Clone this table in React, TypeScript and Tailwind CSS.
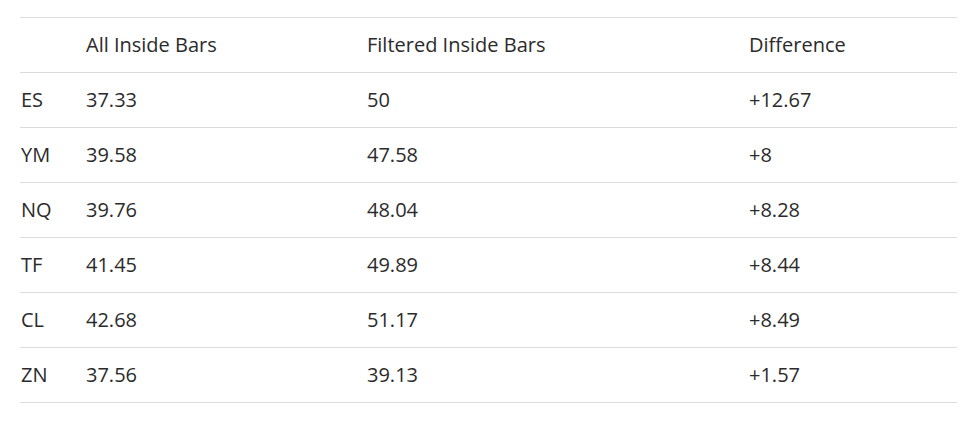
const rows = [
  { sym: "ES", all: "37.33", filtered: "50", diff: "+12.67" },
  { sym: "YM", all: "39.58", filtered: "47.58", diff: "+8" },
  { sym: "NQ", all: "39.76", filtered: "48.04", diff: "+8.28" },
  { sym: "TF", all: "41.45", filtered: "49.89", diff: "+8.44" },
  { sym: "CL", all: "42.68", filtered: "51.17", diff: "+8.49" },
  { sym: "ZN", all: "37.56", filtered: "39.13", diff: "+1.57" },
];

export default function App() {
  return (
    <div
      className="bg-white min-h-[425px] pt-[17px] pl-[20px] pr-[22px] text-[#2b2b2b] text-[20px]"
      style={{ fontFamily: '"Open Sans", "Liberation Sans", sans-serif' }}
    >
      <table className="w-[937px] border-collapse table-fixed">
        <colgroup>
          <col className="w-[66px]" />
          <col className="w-[281px]" />
          <col className="w-[382px]" />
          <col />
        </colgroup>
        <thead>
          <tr className="h-[55px] border-t border-b border-[#dddddd]">
            <th className="font-normal text-left p-0"></th>
            <th className="font-normal text-left p-0">All Inside Bars</th>
            <th className="font-normal text-left p-0">Filtered Inside Bars</th>
            <th className="font-normal text-left p-0">Difference</th>
          </tr>
        </thead>
        <tbody>
          {rows.map((r) => (
            <tr key={r.sym} className="h-[55px] border-b border-[#dddddd]">
              <td className="p-0 pl-px">{r.sym}</td>
              <td className="p-0">{r.all}</td>
              <td className="p-0">{r.filtered}</td>
              <td className="p-0">{r.diff}</td>
            </tr>
          ))}
        </tbody>
      </table>
    </div>
  );
}
